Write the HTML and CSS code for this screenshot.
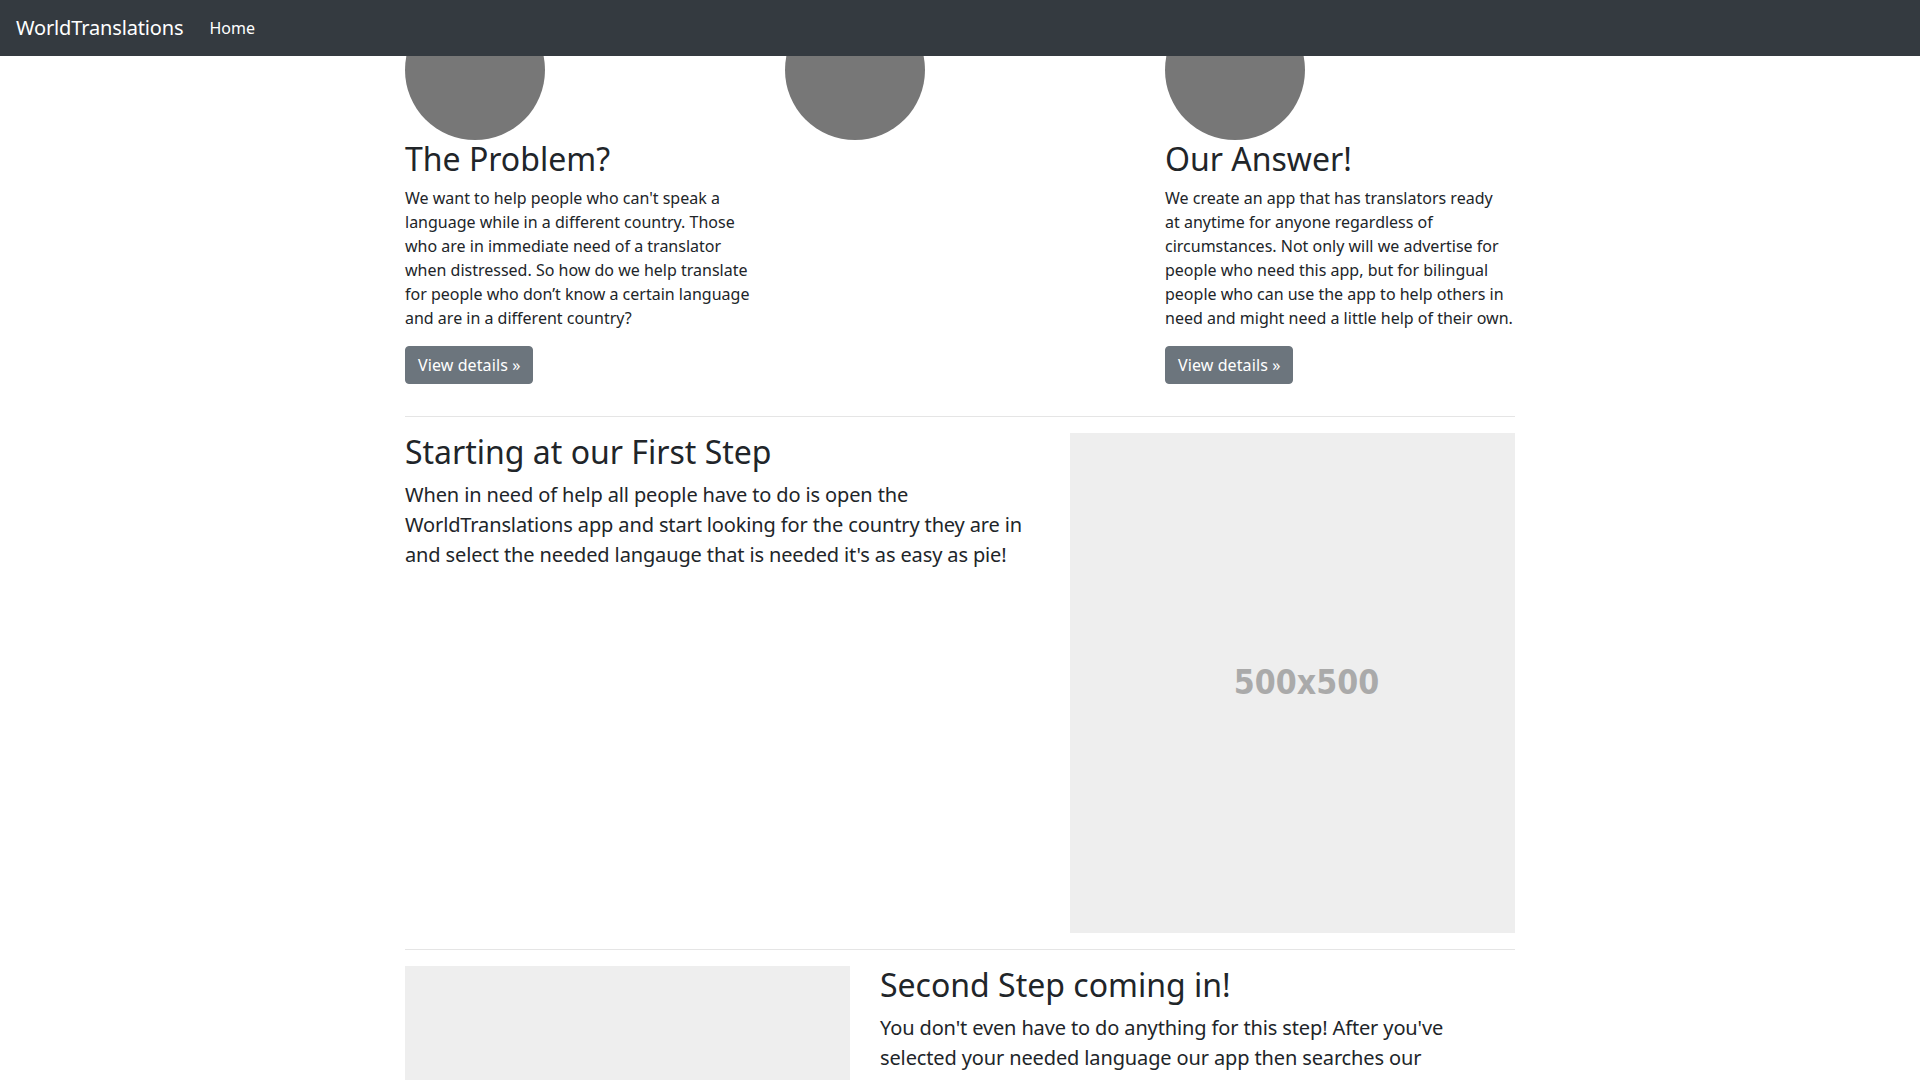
FILE: index.html
```html
<!DOCTYPE html>
<html lang="en">
<head>
<meta charset="utf-8">
<title>WorldTranslations</title>
<link rel="stylesheet" href="styles.css">
</head>
<body>
<header class="navbar">
  <a class="brand" href="#">WorldTranslations</a>
  <nav class="nav">
    <a class="nav-link active" href="#">Home</a>
  </nav>
</header>

<main class="container marketing">
  <div class="row">
    <div class="col col-4">
      <div class="circle"></div>
      <h2 class="col-heading">The Problem?</h2>
      <p class="col-text">We want to help people who can't speak a language while in a different country. Those who are in immediate need of a translator when distressed. So how do we help translate for people who don’t know a certain language and are in a different country?</p>
      <p class="btn-row"><a class="btn" href="#">View details »</a></p>
    </div>
    <div class="col col-4">
      <div class="circle"></div>
    </div>
    <div class="col col-4">
      <div class="circle"></div>
      <h2 class="col-heading">Our Answer!</h2>
      <p class="col-text">We create an app that has translators ready at&nbsp;anytime for anyone regardless of circumstances. Not only will we advertise for people who need this app, but for bilingual people who can use the app to help others in need and might need a little help of their own.</p>
      <p class="btn-row"><a class="btn" href="#">View details »</a></p>
    </div>
  </div>

  <hr class="divider">

  <div class="row featurette">
    <div class="col col-7">
      <h2 class="featurette-heading">Starting at our First Step</h2>
      <p class="lead">When in need of help all people have to do is open the WorldTranslations app and start looking for the country they are in and select the needed langauge that is needed it's as easy as pie!</p>
    </div>
    <div class="col col-5">
      <div class="placeholder"><span class="placeholder-label">500x500</span></div>
    </div>
  </div>

  <hr class="divider">

  <div class="row featurette">
    <div class="col col-5">
      <div class="placeholder"><span class="placeholder-label">500x500</span></div>
    </div>
    <div class="col col-7">
      <h2 class="featurette-heading">Second Step coming in!</h2>
      <p class="lead">You don't even have to do anything for this step! After you've selected your needed language our app then searches our database&nbsp;for a bilingual translator that is available and ready to help you right away with anything you need.</p>
    </div>
  </div>

  <hr class="divider">
</main>
</body>
</html>
```
FILE: styles.css
```css
*, *::before, *::after { box-sizing: border-box; }

html, body {
  margin: 0;
  padding: 0;
}

body {
  font-family: "Noto Sans", "Open Sans", "DejaVu Sans", sans-serif;
  font-size: 16px;
  line-height: 1.5;
  color: #212529;
  background: #fff;
}

a { text-decoration: none; }

/* Navbar */
.navbar {
  position: fixed;
  top: 0;
  left: 0;
  right: 0;
  z-index: 10;
  height: 56px;
  padding: 8px 16px;
  display: flex;
  align-items: center;
  background: #343a40;
}

.brand {
  font-size: 20px;
  line-height: 30px;
  padding: 5px 0;
  margin-right: 18px;
  color: #fff;
  white-space: nowrap;
  letter-spacing: -0.15px;
}

.nav { display: flex; }

.nav-link {
  display: block;
  padding: 8px;
  font-size: 16px;
  line-height: 24px;
  color: rgba(255, 255, 255, 0.5);
}

.nav-link.active { color: #fff; }

/* Layout */
.container {
  max-width: 1140px;
  margin: 0 auto;
  padding: 0 15px;
}

.row {
  display: flex;
  margin: 0 -15px;
}

.col { padding: 0 15px; min-width: 0; }
.col-4 { flex: 0 0 33.333333%; max-width: 33.333333%; }
.col-5 { flex: 0 0 41.666667%; max-width: 41.666667%; }
.col-7 { flex: 0 0 58.333333%; max-width: 58.333333%; }

/* Marketing columns */
.circle {
  width: 140px;
  height: 140px;
  border-radius: 50%;
  background: #777;
}

.col-heading,
.featurette-heading {
  margin: 0 0 8px;
  font-size: 32px;
  line-height: 1.2;
  font-weight: 400;
}

.col-text {
  margin: 0 0 16px;
}

.btn-row {
  display: flex;
  margin: 0 0 16px;
}

.btn {
  display: inline-block;
  padding: 6px 12px;
  font-size: 16px;
  line-height: 24px;
  color: #fff;
  background: #6c757d;
  border: 1px solid #6c757d;
  border-radius: 4px;
  white-space: nowrap;
  letter-spacing: 0.1px;
}

.divider {
  margin: 16px 0;
  border: 0;
  border-top: 1px solid rgba(0, 0, 0, 0.1);
  height: 0;
}

/* Featurettes */
.lead {
  margin: 0 0 16px;
  font-size: 20px;
  line-height: 30px;
  font-weight: 400;
  letter-spacing: -0.13px;
}

.placeholder {
  height: 500px;
  background: #eee;
  display: flex;
  align-items: center;
  justify-content: center;
  padding-left: 28px;
}

.placeholder-label {
  font-family: "DejaVu Sans Condensed", "DejaVu Sans", sans-serif;
  font-stretch: condensed;
  font-weight: 700;
  font-size: 33.5px;
  color: #aaa;
}
```
